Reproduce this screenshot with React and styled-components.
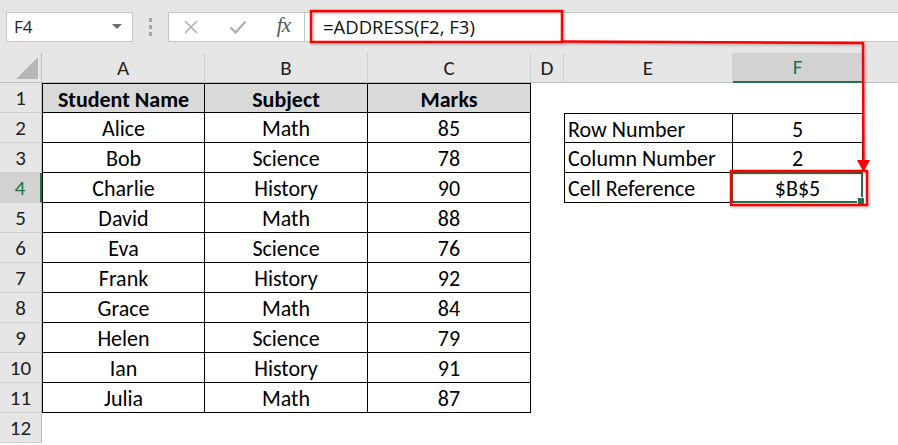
import React from "react";
import styled, { createGlobalStyle } from "styled-components";

const GlobalStyle = createGlobalStyle`
  html, body {
    margin: 0;
    padding: 0;
    background: #ffffff;
    overflow: hidden;
  }
  * { box-sizing: border-box; }
`;

const GREEN = "#217346";
const CELL_FONT = `"Carlito", "Lato", "Liberation Sans", sans-serif`;
const UI_FONT = `"Open Sans", "Noto Sans", "Liberation Sans", sans-serif`;

const Page = styled.div`
  position: relative;
  width: 898px;
  height: 445px;
  background: #ffffff;
  overflow: hidden;
`;

const FormulaStrip = styled.div`
  display: flex;
  align-items: center;
  height: 53px;
  padding: 0 0 0 6px;
  background: #e6e6e6;
`;

const NameBox = styled.div`
  display: flex;
  align-items: center;
  justify-content: space-between;
  width: 127px;
  height: 30px;
  padding: 0 10px 0 7px;
  background: #fff;
  border: 1px solid #c6c6c6;
  font-family: ${UI_FONT};
  font-size: 17px;
  color: #222;
`;

const DropCaret = styled.span`
  width: 0;
  height: 0;
  border-left: 5px solid transparent;
  border-right: 5px solid transparent;
  border-top: 5px solid #6b6b6b;
`;

const Grip = styled.div`
  display: flex;
  flex-direction: column;
  gap: 3px;
  margin: 0 16px 0 16px;
  span {
    width: 3px;
    height: 4px;
    background: #a6a6a6;
  }
`;

const FxBox = styled.div`
  display: flex;
  align-items: center;
  justify-content: space-between;
  width: 137px;
  height: 30px;
  padding: 0 14px 0 14px;
  background: #fff;
  border: 1px solid #c6c6c6;
`;

const Fx = styled.span`
  font-family: "Liberation Serif", "DejaVu Serif", serif;
  font-style: italic;
  font-size: 21px;
  color: #555;
  letter-spacing: -1px;
  margin-top: -3px;
`;

const FormulaInput = styled.div`
  flex: 1;
  height: 30px;
  display: flex;
  align-items: center;
  padding-left: 18px;
  background: #fff;
  border-top: 1px solid #c6c6c6;
  border-bottom: 1px solid #c6c6c6;
  font-family: ${UI_FONT};
  font-size: 18.5px;
  color: #111;
`;

const Sheet = styled.div`
  display: grid;
  grid-template-columns: 42px 163px 163px 163px 33px 169px 130px 1fr;
  grid-auto-rows: 30px;
  font-family: ${CELL_FONT};
  font-size: 22px;
  color: #000;
`;

const Corner = styled.div`
  position: relative;
  background: #e6e6e6;
  border-right: 1px solid #bdbdbd;
  border-bottom: 1px solid #bdbdbd;
  &::after {
    content: "";
    position: absolute;
    right: 3px;
    bottom: 3px;
    width: 0;
    height: 0;
    border-left: 22px solid transparent;
    border-bottom: 22px solid #b7b7b7;
  }
`;

const ColHead = styled.div`
  display: flex;
  align-items: center;
  justify-content: center;
  font-size: 21px;
  background: ${(p) => (p.$active ? "#d2d2d2" : "#e6e6e6")};
  color: ${(p) => (p.$active ? GREEN : "#222")};
  border-right: 1px solid ${(p) => (p.$last ? "transparent" : "#d0d0d0")};
  border-bottom: ${(p) => (p.$active ? `2px solid ${GREEN}` : "1px solid #bdbdbd")};
`;

const RowHead = styled.div`
  display: flex;
  align-items: center;
  justify-content: center;
  font-size: 21px;
  background: ${(p) => (p.$active ? "#d2d2d2" : "#e6e6e6")};
  color: ${(p) => (p.$active ? GREEN : "#222")};
  border-right: ${(p) => (p.$active ? `2px solid ${GREEN}` : "1px solid #bdbdbd")};
  border-bottom: 1px solid #d0d0d0;
`;

const Cell = styled.div`
  position: relative;
  display: flex;
  align-items: center;
  justify-content: ${(p) => (p.$left ? "flex-start" : "center")};
  padding-left: ${(p) => (p.$left ? "3px" : "0")};
  padding-top: 2px;
  background: ${(p) => (p.$head ? "#d9d9d9" : "transparent")};
  font-weight: ${(p) => (p.$head ? 700 : 400)};
  border-right: ${(p) => (p.$box ? "1px solid #000" : "none")};
  border-bottom: ${(p) => (p.$box ? "1px solid #000" : "none")};
  border-left: ${(p) => (p.$first ? "1px solid #000" : "none")};
  border-top: ${(p) => (p.$top ? "1px solid #000" : "none")};
  white-space: nowrap;
`;

const Selected = styled.div`
  position: absolute;
  inset: -1px -1px -1px -2px;
  border: 2px solid ${GREEN};
  pointer-events: none;
  &::after {
    content: "";
    position: absolute;
    right: -4px;
    bottom: -4px;
    width: 6px;
    height: 6px;
    background: ${GREEN};
    border: 1px solid #fff;
  }
`;

const Overlay = styled.svg`
  position: absolute;
  left: 0;
  top: 0;
  pointer-events: none;
`;

const students = [
  ["Alice", "Math", 85],
  ["Bob", "Science", 78],
  ["Charlie", "History", 90],
  ["David", "Math", 88],
  ["Eva", "Science", 76],
  ["Frank", "History", 92],
  ["Grace", "Math", 84],
  ["Helen", "Science", 79],
  ["Ian", "History", 91],
  ["Julia", "Math", 87],
];

const side = {
  2: ["Row Number", "5"],
  3: ["Column Number", "2"],
  4: ["Cell Reference", "$B$5"],
};

const columns = ["A", "B", "C", "D", "E", "F", ""];

function Row({ n }) {
  const s = n >= 2 && n <= 11 ? students[n - 2] : null;
  const e = side[n];
  const head = n === 1;
  return (
    <>
      <RowHead $active={n === 4}>{n}</RowHead>
      {head ? (
        <>
          <Cell $box $head $first $top>Student Name</Cell>
          <Cell $box $head $top>Subject</Cell>
          <Cell $box $head $top>Marks</Cell>
        </>
      ) : s ? (
        <>
          <Cell $box $first>{s[0]}</Cell>
          <Cell $box>{s[1]}</Cell>
          <Cell $box>{s[2]}</Cell>
        </>
      ) : (
        <>
          <Cell />
          <Cell />
          <Cell />
        </>
      )}
      <Cell />
      {e ? (
        <>
          <Cell $box $first $left $top={n === 2}>{e[0]}</Cell>
          <Cell $box $top={n === 2}>
            {e[1]}
            {n === 4 && <Selected />}
          </Cell>
        </>
      ) : (
        <>
          <Cell />
          <Cell />
        </>
      )}
      <Cell />
    </>
  );
}

export default function App() {
  return (
    <Page>
      <GlobalStyle />
      <FormulaStrip>
        <NameBox>
          F4
          <DropCaret />
        </NameBox>
        <Grip>
          <span />
          <span />
          <span />
        </Grip>
        <FxBox>
          <svg width="16" height="16" viewBox="0 0 16 16">
            <path d="M2 2 L14 14 M14 2 L2 14" stroke="#b0b0b0" strokeWidth="1.6" fill="none" />
          </svg>
          <svg width="18" height="16" viewBox="0 0 18 16">
            <path d="M1.5 8.5 L6.5 13.5 L16.5 2.5" stroke="#b0b0b0" strokeWidth="2.4" fill="none" />
          </svg>
          <Fx>fx</Fx>
        </FxBox>
        <FormulaInput>=ADDRESS(F2, F3)</FormulaInput>
      </FormulaStrip>

      <Sheet>
        <Corner />
        {columns.map((c, i) => (
          <ColHead key={i} $active={c === "F"} $last={i === columns.length - 1}>
            {c}
          </ColHead>
        ))}
        {Array.from({ length: 12 }, (_, i) => (
          <Row key={i} n={i + 1} />
        ))}
      </Sheet>

      <Overlay width="898" height="445" viewBox="0 0 898 445">
        <defs>
          <filter id="sh" x="-5%" y="-5%" width="110%" height="110%">
            <feDropShadow dx="1.5" dy="1.5" stdDeviation="1" floodColor="#000" floodOpacity="0.25" />
          </filter>
        </defs>
        <g filter="url(#sh)" fill="none" stroke="#ff0000" strokeWidth="2.5">
          <rect x="311" y="11" width="251" height="31" />
          <rect x="731" y="171" width="136" height="34" />
          <polyline points="562,41.5 863,43 863.5,162" />
        </g>
        <polygon points="857,160 870,160 863.5,172" fill="#ff0000" />
      </Overlay>
    </Page>
  );
}
